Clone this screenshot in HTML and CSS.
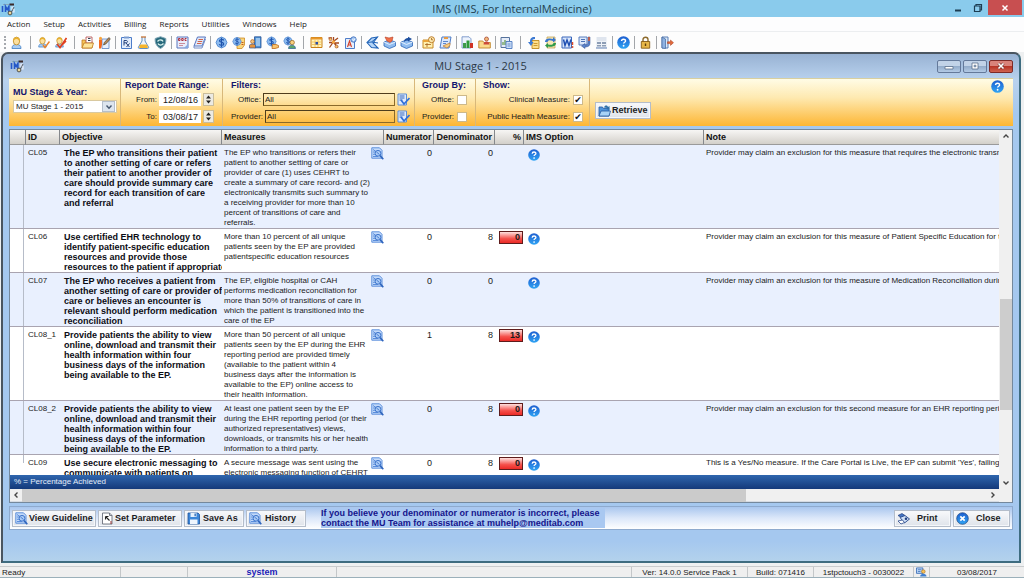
FILE: index.html
```html
<!DOCTYPE html>
<html lang="en">
<head>
<meta charset="utf-8">
<title>IMS (IMS, For InternalMedicine)</title>
<link rel="stylesheet" href="styles.css">
</head>
<body>
<svg class="defs" aria-hidden="true">
  <defs>
    <linearGradient id="ball" x1="0" y1="0" x2="0" y2="1"><stop offset="0" stop-color="#1f5fd0"/><stop offset="1" stop-color="#2fa4f4"/></linearGradient>
    <symbol id="help" viewBox="0 0 12 12"><circle cx="6" cy="6" r="5.800" fill="url(#ball)"/><path d="M4.200 4.700c0-2.300 3.700-2.200 3.700-.2 0 1.300-1.800 1.300-1.800 2.500" fill="none" stroke="#fff" stroke-width="1.300"/><circle cx="6.100" cy="9" r=".85" fill="#fff"/></symbol>
    <symbol id="docsearch" viewBox="0 0 13 13"><path d="M.8.8h7.700l2.500 2.500v7.900H.8z" fill="#c3dafa" stroke="#4f86d8" stroke-width=".9"/><path d="M2 2.500l3 2M2 5h3M2 7.300h2.500M2 9.500h5" stroke="#4f86d8" stroke-width=".9"/><circle cx="7" cy="6.300" r="2.900" fill="#a9caf6" stroke="#3f76cc"/><path d="M5.500 5l3 2.500" stroke="#3f76cc" stroke-width=".9"/><path d="M9 8.600l3.300 3.600" stroke="#2f65bd" stroke-width="1.600"/></symbol>
    <symbol id="ims" viewBox="0 0 14 14"><path d="M2 2.500h8" stroke="#8ab" stroke-width="1"/><path d="M1.500 4v6M4.500 10V4.500l1.700 3 1.700-3V10" fill="none" stroke="#2458c8" stroke-width="1.600"/><path d="M13 5h-2v2.300h2V10h-3" fill="none" stroke="#e8f0ff" stroke-width="1.200"/><path d="M8.500 1.500h4.500v2H9z" fill="#3b2a2a"/><circle cx="9" cy="11" r="1.900" fill="#e8d9a0" stroke="#333" stroke-width=".8"/><path d="M10.500 10l2.500-5" stroke="#444" stroke-width=".8"/></symbol>
    <symbol id="picker" viewBox="0 0 13 13"><path d="M1 1h8.500v11H1z" fill="#dfeafb" stroke="#5c8ed6"/><path d="M2.500 3h5M2.500 5h5M2.500 7h3" stroke="#3568c0"/><path d="M4 7l3 4 5.500-6" fill="none" stroke="#2f6fd8" stroke-width="1.700"/></symbol>
    <symbol id="dollar" viewBox="0 0 13 13"><path d="M6.500 1l3.700 1.700 1.800 3.800-1.800 3.800L6.500 12l-3.700-1.700L1 6.500l1.800-3.800z" fill="#8dbcf0" stroke="#3f7ccc" stroke-width=".8"/><path d="M8.900 4.400C7.800 3 4.300 3.200 4.500 5c.2 1.500 4.200.9 4.200 2.900 0 1.800-3.400 1.700-4.600.5M6.500 1.800v9.400" fill="none" stroke="#1f55ae" stroke-width="1.200"/></symbol>
    <symbol id="person" viewBox="0 0 13 13"><path d="M2 12.500c0-3 1.500-4 4.500-4s4.500 1 4.500 4z" fill="#a9cdf3" stroke="#3d7cc4" stroke-width=".8"/><ellipse cx="6.500" cy="5" rx="3.200" ry="3.900" fill="#fbe0a0" stroke="#b98722" stroke-width=".8"/><path d="M3.200 5C3 0 10 0 9.800 5 8 4.500 8.500 3 6.500 3S4.500 4.500 3.200 5z" fill="#e8b02e"/></symbol>
  </defs>
</svg>

<div class="app">
  <header class="titlebar">
    <svg class="logo" aria-hidden="true"><use href="#ims"/></svg>
    <h1 class="titlebar-text">IMS (IMS, For InternalMedicine)</h1>
    <div class="window-controls">
      <button class="wc" aria-label="Minimize"><svg viewBox="0 0 12 12"><path d="M3 8.500h6" stroke="#1d3d52" stroke-width="2"/></svg></button>
      <button class="wc" aria-label="Restore"><svg viewBox="0 0 12 12"><path d="M2.500 4h5.500v5.500H2.500zM4 4V2.500h5.500V8H8" fill="none" stroke="#1d3d52" stroke-width="1.200"/></svg></button>
      <button class="wc wc-close" aria-label="Close application"><svg viewBox="0 0 12 12"><path d="M3.500 3.500l5 5M8.500 3.500l-5 5" stroke="#fff" stroke-width="1.500"/></svg></button>
    </div>
  </header>

  <nav class="menubar">
    <button>Action</button><button>Setup</button><button>Activities</button><button>Billing</button><button>Reports</button><button>Utilities</button><button>Windows</button><button>Help</button>
  </nav>

  <div class="toolbar" role="toolbar" aria-label="Main tools">
    <span class="grip"></span>
    <div class="tools wide"><button aria-label="Patient"><svg><use href="#person"/></svg></button></div>
    <div class="tools wide">
      <button aria-label="Check in"><svg viewBox="0 0 13 13"><use href="#person" width="11" height="12"/><path d="M6 9l2 2.500 4.500-6" fill="none" stroke="#e8832a" stroke-width="1.500"/></svg></button>
      <button aria-label="Check out"><svg viewBox="0 0 13 13"><use href="#person" width="11" height="12"/><path d="M3 8l3 3.500L12.500 2M8 9l4-4" fill="none" stroke="#e0401e" stroke-width="1.700"/></svg></button>
    </div>
    <div class="tools">
      <button aria-label="Open chart"><svg viewBox="0 0 13 13"><path d="M1 12V4h3l1 1.500h6V12z" fill="#f6c65a" stroke="#c07a1c" stroke-width=".8"/><path d="M5 1h6v6H5z" fill="#fff" stroke="#b04848" stroke-width=".8"/><path d="M7 2.500h2.500M7 4.500h2.500" stroke="#345"/><path d="M1 12l2-5h9.500L11 12z" fill="#fde59b" stroke="#c07a1c" stroke-width=".8"/></svg></button>
      <button aria-label="Write note"><svg viewBox="0 0 13 13"><path d="M4 3h7v9.500H4z" fill="#e9f1fd" stroke="#5a83c4" stroke-width=".8"/><path d="M1 3.500h3v5l-1 4H1z" fill="#f2681f"/><circle cx="2.500" cy="2.200" r="1.500" fill="#f7a33c"/><path d="M5.500 9l.8-2.500L11 1.500 12.300 3 7.800 8z" fill="#b98a5c" stroke="#332" stroke-width=".6"/></svg></button>
    </div>
    <div class="tools">
      <button aria-label="Prescription"><svg viewBox="0 0 13 13"><path d="M1.500 1.500h10v11h-10z" fill="#e2edfc" stroke="#4c7cc9"/><path d="M4 .5h5v2H4z" fill="#7b9cd0"/><path d="M4 9.500V4.500h2c2 0 2 2.300 0 2.300H4M6 7l3.500 4M9.500 7.500L6.500 11" fill="none" stroke="#27427c"/></svg></button>
      <button aria-label="Lab"><svg viewBox="0 0 13 13"><path d="M5 1v4L1.500 11c-.4.900 0 1.500 1 1.500h8c1 0 1.400-.6 1-1.500L8 5V1" fill="#eef5fc" stroke="#5486bb" stroke-width=".9"/><path d="M3.300 8.500h6.400l1.200 2.500c.2.600 0 .9-.6.900H2.700c-.6 0-.8-.3-.6-.9z" fill="#f7b62e"/><path d="M4 1h5" stroke="#c46a28" stroke-width="1.200"/></svg></button>
      <button aria-label="Immunization"><svg viewBox="0 0 13 13"><path d="M6.500.7l5.300 1.800c.3 4-.8 7.500-5.300 10C2 10 .9 6.500 1.200 2.500z" fill="#28697c" stroke="#7fa6b5"/><path d="M3.500 5.500c2-2.500 5-1.500 5.500 0M9.500 7.500c-2 2.500-5 1.500-5.500 0" fill="none" stroke="#d6f0ec" stroke-width="1.300"/></svg></button>
    </div>
    <div class="tools">
      <button aria-label="Documents"><svg viewBox="0 0 13 13"><path d="M1 1h11v11H1z" fill="#e9edfb" stroke="#5976bf"/><path d="M2.500 4.500v-2H4v2zM5.700 4.500v-2h1.500v2zM10.500 2.500H9v2h1.500" fill="none" stroke="#a82030" stroke-width=".9"/><path d="M3 7.500h6M3 9.500h4" stroke="#c98e9c"/><path d="M12 8v4H8z" fill="#84a9e2"/></svg></button>
      <button aria-label="Images"><svg viewBox="0 0 13 13"><path d="M4.500 1h8l-3.500 9H1z" fill="#dfe9fa" stroke="#5976bf"/><path d="M5.500 3.500h4.500M4.700 5.500h4.500M4 7.500h4.500" stroke="#d2644a"/><path d="M1 10v2h8l3.500-9" fill="none" stroke="#7690c8"/></svg></button>
    </div>
    <div class="tools wide">
      <button aria-label="Charges"><svg><use href="#dollar"/></svg></button>
      <button aria-label="Payments"><svg viewBox="0 0 13 13"><path d="M5 2h7.500v7L10 12.500H5z" fill="#fbd67a" stroke="#cc8a24" stroke-width=".8"/><use href="#dollar" width="10" height="11"/><path d="M9.500 6.500h2M9.500 8.500h2" stroke="#c05b20"/></svg></button>
      <button aria-label="Accounts"><svg viewBox="0 0 13 13"><path d="M5.500.8h6.500v11H5.500z" fill="#4d93d8" stroke="#274f91" stroke-width=".8"/><path d="M7 3h4M7 5h4M7 7h4M7 9h4" stroke="#e8f4ff"/><circle cx="3.500" cy="5.500" r="1.900" fill="#f5c27c" stroke="#a05a20" stroke-width=".6"/><path d="M.5 12V9.500c0-2 6-2 6 0V12z" fill="#e5933c" stroke="#2d569c" stroke-width=".7"/></svg></button>
      <button aria-label="Claims"><svg viewBox="0 0 13 13"><use href="#dollar" width="11" height="11"/><path d="M6.500 8.500h3.500l2.500 1v2L9 12.500H6z" fill="#fbc46c" stroke="#b96a1c" stroke-width=".8"/></svg></button>
      <button aria-label="Collections"><svg viewBox="0 0 13 13"><use href="#dollar" width="10" height="10"/><circle cx="9.200" cy="6.500" r="2.200" fill="#f9d07e" stroke="#94601d" stroke-width=".7"/><path d="M5.500 12.500c0-4.500 7-4.500 7 0z" fill="#5aa56b" stroke="#2b5f9a" stroke-width=".7"/></svg></button>
    </div>
    <div class="tools">
      <button aria-label="Scheduler"><svg viewBox="0 0 13 13"><path d="M1 1.500h11v10H1z" fill="#fff3bd" stroke="#c88118"/><path d="M1 1.500h11v2H1z" fill="#e9962a"/><path d="M2 6h9M2 8.500h9M5 4v7M8 4v7" stroke="#f0bd4b" stroke-width=".8"/><path d="M5.500 6h2.500v2.500H5.500z" fill="#2a4fa6"/></svg></button>
      <button aria-label="Referral"><svg viewBox="0 0 13 13"><path d="M1.500 2H5M6.500 1v5M7 5l4-3M2 6.500h4l-3.500 5M7 7l4 4.500M8 7h4" fill="none" stroke="#a4481d" stroke-width="1.300"/><circle cx="6.500" cy="6" r="1.700" fill="#f2a544"/><circle cx="3.500" cy="3.300" r="1.400" fill="#f5c36a" stroke="#a4481d" stroke-width=".6"/><circle cx="9.500" cy="10.500" r="1.500" fill="#f5c36a" stroke="#a4481d" stroke-width=".6"/></svg></button>
      <button aria-label="Authorization"><svg viewBox="0 0 13 13"><path d="M1.500 2.500h9v10h-9z" fill="#e6effc" stroke="#4f7dc8"/><path d="M3.500 11L5.500 5l2 6M4.300 9h2.500" fill="none" stroke="#d5432b" stroke-width="1.100"/><circle cx="9.500" cy="3.500" r="2.700" fill="#a9caf4" stroke="#2e62b5" stroke-width=".8"/><path d="M8.500 3.500l1 1 1.500-2" fill="none" stroke="#fff"/></svg></button>
    </div>
    <div class="tools">
      <button aria-label="Send"><svg viewBox="0 0 13 13"><path d="M11.500 1L5.500 2 1 6.500l4.500 5 6.500.5-5-5z" fill="#b6d6f8" stroke="#2365b8" stroke-width="1.100"/><path d="M11.500 1L5.500 6l-4 .5M5.500 6l6.500 1" fill="none" stroke="#2365b8"/></svg></button>
      <button aria-label="Incoming mail"><svg viewBox="0 0 13 13"><path d="M1 6l5.500-2L12.500 6v4l-6 2.500L1 10z" fill="#8fbcf0" stroke="#2d66b6" stroke-width=".8"/><path d="M1 6l5.500 2.500 6-2.500" fill="none" stroke="#e5f0fd"/><path d="M2 1l4 1 4-1-1 4-2 1.500L4 5z" fill="#ef704a" stroke="#b73a20" stroke-width=".6"/></svg></button>
      <button aria-label="Outgoing mail"><svg viewBox="0 0 13 13"><path d="M1 6l5.500-2L12.500 6v4l-6 2.500L1 10z" fill="#8fbcf0" stroke="#2d66b6" stroke-width=".8"/><path d="M1 6l5.500 2.500 6-2.500" fill="none" stroke="#e5f0fd"/><path d="M4 6c0-3 2-4 4-4V.8L12 3 8 5.500V4.200c-2 0-2.500.8-4 1.800z" fill="#1e4f9f"/></svg></button>
    </div>
    <div class="tools">
      <button aria-label="Appointments"><svg viewBox="0 0 13 13"><path d="M1 4h10v8H1z" fill="#fff0b0" stroke="#c78a25"/><path d="M1 4h10v2H1z" fill="#eaa53a"/><path d="M3 8.500h6M5 7v4" stroke="#a35f19" stroke-width=".8"/><circle cx="9.500" cy="3.700" r="3" fill="#fbe9b0" stroke="#b9741f" stroke-width=".9"/><path d="M9.500 2v1.800H11" fill="none" stroke="#a35f19" stroke-width=".8"/></svg></button>
      <button aria-label="Tasks"><svg viewBox="0 0 13 13"><path d="M3 1h9l-2 11H1z" fill="#dbe8fb" stroke="#4e7cc6"/><path d="M5 1h4v2H5z" fill="#e79a42"/><path d="M4 5.500h5M4 7.500h3" stroke="#5b86cc"/><path d="M4 10l2-1 5-2v2.500L8 12z" fill="#f9cb7c" stroke="#af6a24" stroke-width=".6"/></svg></button>
    </div>
    <div class="tools">
      <button aria-label="Chart report"><svg viewBox="0 0 13 13"><path d="M1 .8h7l2 2V12H1z" fill="#edf3fd" stroke="#6788c2" stroke-width=".8"/><path d="M2 7h3v5H2z" fill="#3d9a4a"/><path d="M5.500 4.500h3V12h-3z" fill="#2e9a3a"/><path d="M9 7h3v5H9z" fill="#cf3325"/></svg></button>
      <button aria-label="Patient folder"><svg viewBox="0 0 13 13"><path d="M.8 12V5h4l1 1.500h6.500V12z" fill="#fadb8c" stroke="#c18428" stroke-width=".9"/><circle cx="8.500" cy="3" r="2" fill="#f4b87a" stroke="#9c3b2a" stroke-width=".7"/><path d="M5.500 8.500c0-4 6-4 6 0z" fill="#cc4a3a"/></svg></button>
    </div>
    <div class="tools wide">
      <button aria-label="Clipboard report"><svg viewBox="0 0 13 13"><path d="M1 1.500h8.500v10H1z" fill="#e5ecf8" stroke="#55729c"/><path d="M3 9V6M5 9V4M7 9V5" stroke="#5e9a44" stroke-width="1.200"/><path d="M6 5.500h6v7H6z" fill="#cfe0f8" stroke="#4c79bf" stroke-width=".9"/><path d="M7.500 8h3M7.500 10h3" stroke="#4c79bf" stroke-width=".8"/></svg></button>
    </div>
    <div class="tools">
      <button aria-label="Transfer"><svg viewBox="0 0 13 13"><path d="M5 4.500h7v8H5z" fill="#ffe08a" stroke="#c08a1e" stroke-width=".9"/><path d="M6.500 7.500h4M6.500 9.500h4" stroke="#c08a1e" stroke-width=".8"/><path d="M8 1C4 .5 3 3 3 6H1l3 4 2.500-4H5c0-2 .5-3 3-3z" fill="#3b79d2"/></svg></button>
      <button aria-label="Exchange"><svg viewBox="0 0 13 13"><path d="M3 1h8v11H3z" fill="#f7e9b4" stroke="#bb9a45" stroke-width=".7"/><path d="M1 6c0-4 5-4 8-3V1l3 3-3 2.500V5C6 4 4 4 3.500 6z" fill="#3775ce"/><path d="M12 7c0 4-5 4-8 3.500V12L1 9.500 4 7v1.500c3 .5 5 .5 5.500-1.500z" fill="#2f9a48"/></svg></button>
      <button aria-label="Word"><svg viewBox="0 0 13 13"><path d="M1 1h9.500v11H1z" fill="#d9e6fb" stroke="#3a66bb"/><path d="M2.500 3.500L4 9.500 6 4l2 5.500 2-6" fill="none" stroke="#1f4fb2" stroke-width="1.500"/><path d="M11.500 6v3" stroke="#dc4b28" stroke-width="1.500"/><circle cx="11.500" cy="11" r="1" fill="#dc4b28"/></svg></button>
      <button aria-label="Fax"><svg viewBox="0 0 13 13"><path d="M1 1h8v8H1z" fill="#dce8fa" stroke="#4b72b8" stroke-width=".9"/><path d="M3 3.500h4M3 5.500h4" stroke="#4b72b8"/><path d="M10 1h2v6c0 3-2 4-5 4v1.500L3.500 10 7 7.500V9c2 0 3-.5 3-2.500z" fill="#5b83ca" stroke="#2e4f90" stroke-width=".5"/><path d="M11 1v4" stroke="#df5b31" stroke-width="1.500"/></svg></button>
      <button aria-label="Calculator"><svg viewBox="0 0 13 13"><path d="M1 1h11v11H1z" fill="#eef2f7"/><path d="M2 1h9v4H2z" fill="#dfe5ee"/><path d="M2 6h4v2H2zM7 6h4v2H7zM2 9h4v1.500H2zM7 9h4v1.500H7z" fill="#8d9db5"/><path d="M1 12h11" stroke="#5f7fb2"/></svg></button>
    </div>
    <div class="tools"><button aria-label="Help"><svg><use href="#help"/></svg></button></div>
    <div class="tools"><button aria-label="Lock"><svg viewBox="0 0 13 13"><path d="M4 6V3.500c0-3 5-3 5 0V6" fill="none" stroke="#8c6a2c" stroke-width="1.400"/><path d="M2.300 5.500h8.400v6.700H2.300z" fill="#e8b748" stroke="#855c18" stroke-width=".9"/><path d="M6.500 7.500v2.500" stroke="#5b3d0c" stroke-width="1.400"/></svg></button></div>
    <div class="tools last"><button aria-label="Exit"><svg viewBox="0 0 13 13"><path d="M1 1h6v11H1z" fill="#dce8f7" stroke="#5b7fb5"/><path d="M1 1l3.500 2v9.500L1 12z" fill="#8fb2e2" stroke="#44699f" stroke-width=".7"/><path d="M6.500 5.800h3V4l3 2.700-3 2.700V7.600h-3z" fill="#e36a3b" stroke="#a83b1b" stroke-width=".5"/></svg></button></div>
  </div>

  <main class="mdi">
    <div class="mdi-title">
      <svg class="logo" aria-hidden="true"><use href="#ims"/></svg>
      <h2>MU Stage 1 - 2015</h2>
      <div class="mdi-controls">
        <button aria-label="Minimize window"><svg viewBox="0 0 12 10"><path d="M2 5.500h8v2.500H2z" fill="#fff" stroke="#5a6f8c" stroke-width=".8"/></svg></button>
        <button aria-label="Maximize window"><svg viewBox="0 0 12 10"><path d="M3 2h6v6H3z" fill="#fff" stroke="#5a6f8c" stroke-width=".8"/><path d="M5 4.200h2v1.600H5z" fill="#8fa9c8" stroke="#5a6f8c" stroke-width=".6"/></svg></button>
        <button class="red" aria-label="Close window"><svg viewBox="0 0 12 10"><path d="M3.500 2.500l5 5M8.500 2.500l-5 5" stroke="#7d3a35" stroke-width="3"/><path d="M3.500 2.500l5 5M8.500 2.500l-5 5" stroke="#fff" stroke-width="1.600"/></svg></button>
      </div>
    </div>

    <form class="filters">
      <section class="f-stage">
        <label class="cap" for="stage">MU Stage &amp; Year:</label>
        <div class="select"><select id="stage"><option>MU Stage 1 - 2015</option></select><span class="drop"><svg viewBox="0 0 8 6"><path d="M1.500 1.500L4 4.200l2.500-2.700" fill="none" stroke="#44566e" stroke-width="1.400"/></svg></span></div>
      </section>
      <section class="f-range">
        <span class="cap">Report Date Range:</span>
        <div class="line"><label for="from">From:</label><input id="from" class="date" value="12/08/16"><span class="spin"><button type="button" aria-label="From later"><svg viewBox="0 0 7 4"><path d="M3.500.5L6 3.500H1z"/></svg></button><button type="button" aria-label="From earlier"><svg viewBox="0 0 7 4"><path d="M3.500 3.500L6 .5H1z"/></svg></button></span></div>
        <div class="line"><label for="to">To:</label><input id="to" class="date" value="03/08/17"><span class="spin"><button type="button" aria-label="To later"><svg viewBox="0 0 7 4"><path d="M3.500.5L6 3.500H1z"/></svg></button><button type="button" aria-label="To earlier"><svg viewBox="0 0 7 4"><path d="M3.500 3.500L6 .5H1z"/></svg></button></span></div>
      </section>
      <section class="f-filters">
        <span class="cap">Filters:</span>
        <div class="line"><label for="office">Office:</label><input id="office" class="pick" value="All"><button type="button" class="picker" aria-label="Choose office"><svg><use href="#picker"/></svg></button></div>
        <div class="line"><label for="provider">Provider:</label><input id="provider" class="pick" value="All"><button type="button" class="picker" aria-label="Choose provider"><svg><use href="#picker"/></svg></button></div>
      </section>
      <section class="f-group">
        <span class="cap">Group By:</span>
        <div class="line"><label for="g1">Office:</label><input id="g1" type="checkbox"></div>
        <div class="line"><label for="g2">Provider:</label><input id="g2" type="checkbox"></div>
      </section>
      <section class="f-show">
        <span class="cap">Show:</span>
        <div class="line"><label for="s1">Clinical Measure:</label><input id="s1" type="checkbox" checked></div>
        <div class="line"><label for="s2">Public Health Measure:</label><input id="s2" type="checkbox" checked></div>
      </section>
      <div class="f-go"><button type="button" class="btn"><svg viewBox="0 0 13 13"><path d="M1 12V3h3.500l1 1.500H11V12z" fill="#4f94dc" stroke="#24599f" stroke-width=".8"/><path d="M1 12l2-5h9.500L11 12z" fill="#a8d2f6" stroke="#24599f" stroke-width=".8"/><path d="M6 3.500c1-2.500 3-2.500 4-.5l1.500-1v3.500H8.500L9.500 4" fill="#2d6fa8"/></svg>Retrieve</button></div>
      <button type="button" class="f-help" aria-label="Help on this window"><svg><use href="#help"/></svg></button>
    </form>

    <div class="grid">
      <div class="grid-view">
        <div class="grid-rows">
          <table>
            <colgroup><col class="c-tree"><col class="c-id"><col class="c-obj"><col class="c-mea"><col class="c-ico"><col class="c-num"><col class="c-den"><col class="c-pct"><col class="c-opt"><col></colgroup>
            <thead><tr><th></th><th>ID</th><th>Objective</th><th colspan="2">Measures</th><th class="r">Numerator</th><th class="r">Denominator</th><th class="r">%</th><th>IMS Option</th><th>Note</th></tr></thead>
            <tbody>
              <tr><td class="tree"></td><td>CL05</td><td class="obj">The EP who transitions their patient<br>to another setting of care or refers<br>their patient to another provider of<br>care should provide summary care<br>record for each transition of care<br>and referral</td><td class="mea">The EP who transitions or refers their<br>patient to another setting of care or<br>provider of care (1) uses CEHRT to<br>create a summary of care record- and (2)<br>electronically transmits such summary to<br>a receiving provider for more than 10<br>percent of transitions of care and<br>referrals.</td><td class="ico"><svg><use href="#docsearch"/></svg></td><td class="r">0</td><td class="r">0</td><td></td><td class="opt"><svg><use href="#help"/></svg></td><td>Provider may claim an exclusion for this measure that requires the electronic transm</td></tr>
              <tr><td class="tree"></td><td>CL06</td><td class="obj">Use certified EHR technology to<br>identify patient-specific education<br>resources and provide those<br>resources to the patient if appropriate</td><td class="mea">More than 10 percent of all unique<br>patients seen by the EP are provided<br>patientspecific education resources</td><td class="ico"><svg><use href="#docsearch"/></svg></td><td class="r">0</td><td class="r">8</td><td class="pct"><span>0</span></td><td class="opt"><svg><use href="#help"/></svg></td><td>Provider may claim an exclusion for this measure of Patient Specific Education for th</td></tr>
              <tr><td class="tree"></td><td>CL07</td><td class="obj">The EP who receives a patient from<br>another setting of care or provider of<br>care or believes an encounter is<br>relevant should perform medication<br>reconciliation</td><td class="mea">The EP, eligible hospital or CAH<br>performs medication reconciliation for<br>more than 50% of transitions of care in<br>which the patient is transitioned into the<br>care of the EP</td><td class="ico"><svg><use href="#docsearch"/></svg></td><td class="r">0</td><td class="r">0</td><td></td><td class="opt"><svg><use href="#help"/></svg></td><td>Provider may claim an exclusion for this measure of Medication Reconciliation durin</td></tr>
              <tr><td class="tree"></td><td>CL08_1</td><td class="obj">Provide patients the ability to view<br>online, download and transmit their<br>health information within four<br>business days of the information<br>being available to the EP.</td><td class="mea">More than 50 percent of all unique<br>patients seen by the EP during the EHR<br>reporting period are provided timely<br>(available to the patient within 4<br>business days after the information is<br>available to the EP) online access to<br>their health information.</td><td class="ico"><svg><use href="#docsearch"/></svg></td><td class="r">1</td><td class="r">8</td><td class="pct"><span>13</span></td><td class="opt"><svg><use href="#help"/></svg></td><td></td></tr>
              <tr><td class="tree"></td><td>CL08_2</td><td class="obj">Provide patients the ability to view<br>online, download and transmit their<br>health information within four<br>business days of the information<br>being available to the EP.</td><td class="mea">At least one patient seen by the EP<br>during the EHR reporting period (or their<br>authorized representatives) views,<br>downloads, or transmits his or her health<br>information to a third party.</td><td class="ico"><svg><use href="#docsearch"/></svg></td><td class="r">0</td><td class="r">8</td><td class="pct"><span>0</span></td><td class="opt"><svg><use href="#help"/></svg></td><td>Provider may claim an exclusion for this second measure for an EHR reporting peric</td></tr>
              <tr><td class="tree end"></td><td>CL09</td><td class="obj">Use secure electronic messaging to<br>communicate with patients on</td><td class="mea">A secure message was sent using the<br>electronic messaging function of CEHRT</td><td class="ico"><svg><use href="#docsearch"/></svg></td><td class="r">0</td><td class="r">8</td><td class="pct"><span>0</span></td><td class="opt"><svg><use href="#help"/></svg></td><td>This is a Yes/No measure. If the Care Portal is Live, the EP can submit 'Yes', failing</td></tr>
            </tbody>
          </table>
        </div>
        <div class="legend">% = Percentage Achieved</div>
      </div>
      <div class="vscroll"><svg viewBox="0 0 8 8"><path d="M1.500 5.500L4 3l2.500 2.500" fill="none" stroke="#444" stroke-width="1.400"/></svg><span class="space-top"></span><span class="thumb"></span><span class="space-bottom"></span><svg viewBox="0 0 8 8"><path d="M1.500 2.500L4 5l2.500-2.500" fill="none" stroke="#444" stroke-width="1.400"/></svg></div>
      <div class="hscroll"><svg viewBox="0 0 8 8"><path d="M5.500 1.500L3 4l2.500 2.500" fill="none" stroke="#444" stroke-width="1.400"/></svg><span class="thumb"></span><span class="space"></span><svg viewBox="0 0 8 8"><path d="M2.500 1.500L5 4 2.500 6.500" fill="none" stroke="#444" stroke-width="1.400"/></svg></div>
    </div>

    <footer class="actions">
      <button class="btn w-l"><svg><use href="#docsearch"/></svg>View Guideline</button>
      <button class="btn w-l"><svg viewBox="0 0 13 13"><path d="M1.500 1h7L11 3.500V12H1.500z" fill="#fff" stroke="#6a6f7c" stroke-width=".9"/><path d="M8.500 1v2.500H11" fill="none" stroke="#6a6f7c" stroke-width=".9"/><path d="M4.500 4.500l4 4M4.500 4.500v3M4.500 4.500h3" fill="none" stroke="#222" stroke-width="1.100"/><path d="M10 9v3" stroke="#9a3030"/></svg>Set Parameter</button>
      <button class="btn w-m"><svg viewBox="0 0 13 13"><path d="M1 1h10l1.500 1.500V12H1z" fill="#3c86d8" stroke="#1e549d" stroke-width=".8"/><path d="M3.500 1h6v4h-6z" fill="#e6f1fc"/><path d="M7.500 1.500h1.300v2.700H7.500z" fill="#2565b3"/><path d="M3 7.500h7.500V12H3z" fill="#eef5fd"/></svg>Save As</button>
      <button class="btn w-m"><svg><use href="#docsearch"/></svg>History</button>
      <p class="notice">If you believe your denominator or numerator is incorrect, please<br>contact the MU Team for assistance at muhelp@meditab.com</p>
      <span class="push"></span>
      <button class="btn w-s"><svg viewBox="0 0 13 13"><path d="M1 3.500l4-2 3 2-3.500 2z" fill="#4576c4" stroke="#223f80" stroke-width=".7"/><path d="M3 5.500l5-2 4.500 3.500-5 4z" fill="#cfe0f6" stroke="#27488c" stroke-width=".9"/><path d="M1 9l4.500-1 2 2.500L4 12z" fill="#fff" stroke="#27488c" stroke-width=".8"/><circle cx="9" cy="6.700" r="1.300" fill="#223f80"/></svg>Print</button>
      <button class="btn w-s"><svg viewBox="0 0 13 13"><circle cx="6.500" cy="6.500" r="5.800" fill="url(#ball)" stroke="#17407e" stroke-width=".7"/><path d="M4.300 4.300l4.400 4.400M8.700 4.300L4.300 8.700" stroke="#fff" stroke-width="1.700"/></svg>Close</button>
    </footer>
  </main>

  <div class="status">
    <span class="s-ready">Ready</span><span class="s-gap"></span><span class="s-user">system</span><span class="s-fill"></span><span class="s-ver">Ver: 14.0.0 Service Pack 1</span><span class="s-build">Build: 071416</span><span class="s-host">1stpctouch3 - 0030022</span><span class="s-icon"><svg viewBox="0 0 13 11"><path d="M1 1h7v6H1z" fill="#bcd8f7" stroke="#3468b4" stroke-width=".9"/><path d="M2.500 3h4M2.500 5h3" stroke="#3468b4" stroke-width=".8"/><circle cx="8.500" cy="5" r="2" fill="#f8c257" stroke="#9b6417" stroke-width=".6"/><path d="M5 10.500c0-4 7-4 7 0z" fill="#3d7fd2"/></svg></span><span class="s-date">03/08/2017</span>
  </div>
</div>
</body>
</html>
```
FILE: styles.css
```css
* { box-sizing: border-box; }

body {
  margin: 0;
  background: #eef0f1;
  color: #1a1a1a;
  font: 8px/10px "Liberation Sans", sans-serif;
}

button, input, select { font: inherit; color: inherit; margin: 0; padding: 0; border: 0; background: none; border-radius: 0; }
h1, h2, p { margin: 0; font-weight: normal; }
svg { display: block; flex: none; }
.defs { position: absolute; width: 0; height: 0; }

.app { display: flex; flex-direction: column; height: 100vh; overflow: hidden; }

/* application frame */
.titlebar { display: grid; grid-template-columns: 1fr auto 1fr; align-items: center; height: 17px; background: #8acbec; }
.logo { width: 14px; height: 14px; margin-left: 1px; }
.titlebar-text { font: 11px/16px "Open Sans", sans-serif; color: #23404f; }
.window-controls { display: flex; align-self: start; justify-content: flex-end; padding-right: 2px; }
.wc { width: 20px; height: 15px; display: grid; place-items: center; }
.wc svg { width: 12px; height: 12px; }
.wc-close { width: 34px; background: #c84f50; }

.menubar { display: flex; gap: 13px; height: 15px; padding-left: 7px; background: #fdfdfe; border-bottom: 1px solid #eceef0; font: 8px/14px "Open Sans", sans-serif; }

.toolbar { display: flex; align-items: center; height: 20px; padding: 0 4px; background: #fdfdfd; }
.grip { width: 2px; height: 13px; margin-right: 4px; border-left: 2px dotted #a5a8ad; }
.tools { display: flex; gap: 4px; padding-right: 4px; margin-right: 4px; border-right: 1px solid #a3a6aa; }
.tools.wide { padding-right: 7px; margin-right: 6px; }
.tools.last { border: 0; }
.tools button, .tools svg { width: 13px; height: 13px; display: block; }

/* child window */
.mdi {
  flex: 1; min-height: 0; display: flex; flex-direction: column;
  margin: 0 3px 3px 1px; padding: 0 6px;
  border: 2px solid #4a5560; border-right-color: #3e6c80; border-bottom-color: #3e6c80;
  border-radius: 7px 7px 0 0;
  background: linear-gradient(#98b2d3, #b9d2ee 26px, #a5c8ef 60px, #a5c8ef calc(100% - 20px), #b3d2ec);
}
.mdi-title { display: flex; align-items: center; height: 24px; }
.mdi-title h2 { flex: 1; text-align: center; font: 11px/20px "Open Sans", sans-serif; color: #2b3845; }
.mdi-controls { display: flex; gap: 2px; }
.mdi-controls button { width: 24px; height: 13px; display: grid; place-items: center; border: 1px solid #64799a; border-radius: 2px; background: linear-gradient(#c2d3e8 45%, #94adcb 50%, #b3cae5); }
.mdi-controls .red { border-color: #7d2b27; background: linear-gradient(#d9837a 45%, #b83527 50%, #cf6350); }
.mdi-controls svg { width: 12px; height: 10px; }

/* filter strip */
.filters { display: flex; flex: none; height: 48px; border-top: 1px solid #d8cfa0; background: linear-gradient(#fffce6, #fee9b0 40%, #fdb634); }
.filters section { padding: 1px 4px 0; border-right: 1px solid #d8b87a; }
.cap { display: block; font: bold 9px/11px "Liberation Sans", sans-serif; color: #14146e; white-space: nowrap; }
.line { display: flex; align-items: center; justify-content: flex-end; height: 17px; gap: 2px; white-space: nowrap; }
.filters .f-stage { width: 112px; padding-top: 8px; }
.select { position: relative; margin-top: 2px; }
.select select { display: block; width: 104px; height: 13px; padding-left: 2px; background: #fff; border: 1px solid #d9c9a0; appearance: none; }
.drop { position: absolute; top: 1px; right: 1px; width: 13px; height: 11px; display: grid; place-items: center; background: #dde5ee; border: 1px solid #b5bfcb; pointer-events: none; }
.drop svg { width: 8px; height: 6px; }
.filters .f-range { width: 102px; padding-right: 8px; }
.date { width: 42px; height: 13px; padding-left: 4px; background: #fff; font-size: 9px; }
.spin { display: flex; flex-direction: column; justify-content: space-around; align-items: center; width: 11px; height: 13px; background: #eceae2; border: 1px solid #c9bd9c; }
.spin button { height: 4px; }
.spin svg { width: 7px; height: 4px; fill: #222; }
.filters .f-filters { width: 192px; padding-left: 8px; }
.pick { width: 132px; height: 13px; padding: 0 0 1px 1px; border: 1px solid #8a6a2a; border-top-color: #4f3d1c; border-left-color: #4f3d1c; }
.picker, .picker svg { width: 13px; height: 13px; }
.filters .f-group { width: 61px; padding-left: 7px; padding-right: 8px; }
.filters .f-show { width: 114px; padding-left: 7px; padding-right: 6px; }
.line input[type="checkbox"] { appearance: none; width: 10px; height: 10px; margin-left: 1px; background: #fff; border: 1px solid #cdb98a; display: grid; place-items: center; }
.line input[type="checkbox"]:checked::before { content: "✔"; font: 9px/8px "DejaVu Sans", sans-serif; color: #111; }
.f-go { padding: 23px 0 0 5px; flex: 1; }
.f-help { align-self: flex-start; margin: 1px 9px 0 0; }
.f-help svg { width: 13px; height: 13px; }

.btn {
  display: flex; align-items: center; height: 17px; padding: 0 2px; gap: 1px; white-space: nowrap;
  font: bold 9px/15px "Liberation Sans", sans-serif; color: #1c1c24;
  background: linear-gradient(#f8f9fb, #dfe3ea); border: 1px solid #b4bdca; box-shadow: inset 0 0 0 1px #f5f7fa;
}
.btn svg { width: 13px; height: 13px; }

/* measures grid */
.grid {
  flex: 1; min-height: 0; display: grid; grid-template: minmax(0, 1fr) 13px / minmax(0, 1fr) 13px;
  margin-top: 3px; border: 1px solid #74889c; background: #f0f0f0;
}
.grid-view { display: flex; flex-direction: column; min-height: 0; }
.grid-rows { flex: 1; min-height: 0; overflow: hidden; background: #fff; }
table { width: 100%; table-layout: fixed; border-collapse: separate; border-spacing: 0; }
.c-tree { width: 16px; }
.c-id { width: 34px; }
.c-obj { width: 162px; }
.c-mea { width: 148px; }
.c-ico { width: 14px; }
.c-num { width: 50px; }
.c-den { width: 61px; }
.c-pct { width: 29px; }
.c-opt { width: 180px; }
th {
  height: 15px; padding: 0 2px; text-align: left; overflow: hidden; white-space: nowrap;
  font: bold 9px/13px "Liberation Sans", sans-serif; color: #111;
  background: linear-gradient(#f7f6f4, #d3d0ca); border-right: 1px solid #85888c; border-bottom: 1px solid #9a9a9a;
}
th:last-child { border-right: 0; }
td { padding: 3px 2px 0; height: 24px; vertical-align: top; overflow: hidden; white-space: nowrap; border-bottom: 1px solid #a9a4b0; }
tbody tr:nth-child(odd) { background: #e9f0fe; }
td.obj { padding-left: 4px; padding-right: 0; font: bold 9px/10px "Liberation Sans", sans-serif; color: #0c0c14; }
td.mea { padding-right: 0; }
td.ico { padding: 2px 0 0 1px; }
td.ico svg { width: 13px; height: 13px; }
td.opt { padding: 4px 0 0 4px; }
td.opt svg { width: 12px; height: 12px; }
td.pct { padding: 2px 1px 0 4px; }
td.pct span { display: block; height: 13px; padding-right: 2px; border: 1px solid #5e1c1c; background: linear-gradient(#fde0de, #f5514c 60%, #ea2a26); font: bold 9px/11px "Liberation Sans", sans-serif; text-align: right; }
.r { text-align: right; }
td.r { font-size: 9px; }
.tree { background: linear-gradient(#b6bcc8, #b6bcc8) 13px 0 / 1px 100% no-repeat; }
.tree.end { background-size: 1px 8px; }
.legend { height: 14px; padding-left: 4px; background: linear-gradient(#2f66ae, #14397a); color: #e3ecf8; line-height: 14px; }

.vscroll { display: flex; flex-direction: column; align-items: center; background: #f0f0f0; }
.vscroll svg, .hscroll svg { width: 8px; height: 8px; margin: 2px; }
.vscroll .thumb { width: 12px; flex: 110; background: #cdcdcd; }
.vscroll .space-top { flex: 157; }
.vscroll .space-bottom { flex: 67; }
.hscroll { display: flex; align-items: center; background: #f0f0f0; border-bottom: 1px solid #d5dbe3; }
.hscroll .thumb { flex: 3; height: 13px; background: #cbcbcb; }
.hscroll .space { flex: 1; }

/* action bar */
.actions { display: flex; flex: none; align-items: center; gap: 2px; height: 24px; margin: 3px 0 31px; padding: 0 2px; border: 1px solid #8eaace; background: linear-gradient(#a9c6ee, #dbe7f9 50%, #fff); }
.w-l { width: 84px; }
.w-m { width: 60px; gap: 3px; }
.w-s { width: 57px; gap: 7px; }
.notice { margin-left: 13px; padding-right: 5px; background: #a9c8f1; color: #14148c; font: bold 9px/10px "Liberation Sans", sans-serif; white-space: nowrap; }
.push { flex: 1; }

/* status bar */
.status { display: flex; height: 12px; line-height: 11px; border-top: 1px solid #c9ccce; border-bottom: 1px solid #9bb0ba; background: #efefef; white-space: nowrap; }
.status span { border-right: 1px solid #c4c7c9; text-align: center; }
.status .s-ready { width: 121px; padding-left: 2px; text-align: left; }
.s-gap { width: 67px; }
.status .s-user { width: 149px; font: bold 9px/11px "Liberation Sans", sans-serif; color: #1c1cb8; }
.s-fill { flex: 1; }
.s-ver { width: 116px; }
.s-build { width: 66px; }
.s-host { width: 100px; }
.s-icon svg { width: 13px; height: 10px; margin: 0 1px; }
.status .s-date { width: 94px; border: 0; }
```
